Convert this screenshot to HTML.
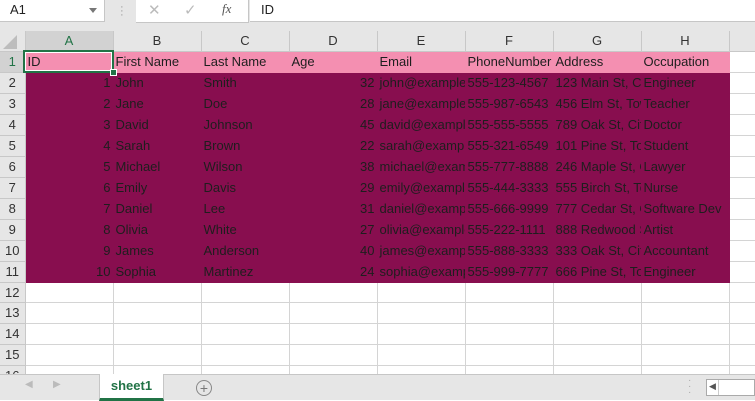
<!DOCTYPE html>
<html><head><meta charset="utf-8"><style>
body{margin:0;width:755px;height:400px;overflow:hidden;background:#fff;font-family:"Liberation Sans",Arial,sans-serif;position:relative}
.top{position:absolute;left:0;top:0;width:755px;height:31px;background:#e6e6e6}
.nb{position:absolute;left:0;top:0;width:105px;height:22px;background:#fff;border-right:1px solid #c6c6c6;border-bottom:1px solid #c6c6c6;font-size:13px;line-height:20px;padding-left:10px;box-sizing:border-box;color:#222}
.nb:after{content:"";position:absolute;right:7px;top:8px;border:4px solid transparent;border-top:5px solid #777}
.fx{position:absolute;left:136px;top:0;width:112px;height:22px;background:#fff;border-right:1px solid #c6c6c6;border-bottom:1px solid #c6c6c6}
.fb{position:absolute;left:250px;top:0;width:505px;height:22px;background:#fff;border-bottom:1px solid #c6c6c6;font-size:13px;line-height:20px;padding-left:11px;box-sizing:border-box;color:#222}
table{position:absolute;left:0;top:31px;width:769px;border-collapse:collapse;table-layout:fixed;font-size:13px}
td{height:20px;padding:0 2px;border-right:1px solid #d4d4d4;border-bottom:1px solid #d4d4d4;white-space:nowrap;overflow:hidden;text-overflow:clip;color:#1e1e1e;box-sizing:border-box}
tr.h td{background:#e6e6e6;text-align:center;color:#333;border-color:#c8c8c8;height:20px}
td.r{background:#e6e6e6;text-align:center;color:#333;border-color:#c8c8c8;padding:0}
tr.p td:not(.r):not(.e){background:#f48fb1;border-color:#f48fb1}
tr.d td:not(.r):not(.e){background:#880e4f;border-color:#880e4f}
tr.d td{height:21px}
td.n{text-align:right}
.tabs{position:absolute;left:0;top:374px;width:755px;height:26px;background:#e6e6e6;border-top:1px solid #c6c6c6;box-sizing:border-box}
.tab{position:absolute;left:99px;top:-1px;width:63px;height:24px;background:#fff;border:1px solid #c6c6c6;border-top:none;border-bottom:3px solid #217346;font-size:13px;font-weight:bold;color:#217346;text-align:center;line-height:24px}
</style></head><body>
<div class="top">
<div class="nb">A1</div>
<div style="position:absolute;left:120px;top:5px;color:#999;font-size:11px;line-height:4px">·<br>·<br>·</div>
<div class="fx"><span style="position:absolute;left:12px;top:1px;color:#bbb;font-size:15px">✕</span><span style="position:absolute;left:48px;top:1px;color:#bbb;font-size:15px">✓</span><span style="position:absolute;left:86px;top:1px;color:#555;font-size:13px;font-style:italic;font-family:'Liberation Serif',serif">fx</span></div>
<div class="fb">ID</div>
</div>
<table>
<colgroup><col style="width:25px"><col style="width:88px"><col style="width:88px"><col style="width:88px"><col style="width:88px"><col style="width:88px"><col style="width:88px"><col style="width:88px"><col style="width:88px"><col style="width:40px"></colgroup>
<tr class="h"><td></td><td style="background:#d2d2d2;border-bottom:2px solid #217346;color:#217346">A</td><td>B</td><td>C</td><td>D</td><td>E</td><td>F</td><td>G</td><td>H</td><td></td></tr>
<tr class="p" style="height:21px"><td class="r" style="background:#d2d2d2;color:#217346">1</td><td>ID</td><td>First Name</td><td>Last Name</td><td>Age</td><td>Email</td><td>PhoneNumber</td><td>Address</td><td>Occupation</td><td class="e"></td></tr>
<tr class="d"><td class="r">2</td><td class="n">1</td><td>John</td><td>Smith</td><td class="n">32</td><td>john@example.com</td><td>555-123-4567</td><td>123 Main St, City</td><td>Engineer</td><td class="e"></td></tr>
<tr class="d"><td class="r">3</td><td class="n">2</td><td>Jane</td><td>Doe</td><td class="n">28</td><td>jane@example.com</td><td>555-987-6543</td><td>456 Elm St, Town</td><td>Teacher</td><td class="e"></td></tr>
<tr class="d"><td class="r">4</td><td class="n">3</td><td>David</td><td>Johnson</td><td class="n">45</td><td>david@example.com</td><td>555-555-5555</td><td>789 Oak St, City</td><td>Doctor</td><td class="e"></td></tr>
<tr class="d"><td class="r">5</td><td class="n">4</td><td>Sarah</td><td>Brown</td><td class="n">22</td><td>sarah@example.com</td><td>555-321-6549</td><td>101 Pine St, Town</td><td>Student</td><td class="e"></td></tr>
<tr class="d"><td class="r">6</td><td class="n">5</td><td>Michael</td><td>Wilson</td><td class="n">38</td><td>michael@example.com</td><td>555-777-8888</td><td>246 Maple St, City</td><td>Lawyer</td><td class="e"></td></tr>
<tr class="d"><td class="r">7</td><td class="n">6</td><td>Emily</td><td>Davis</td><td class="n">29</td><td>emily@example.com</td><td>555-444-3333</td><td>555 Birch St, Town</td><td>Nurse</td><td class="e"></td></tr>
<tr class="d"><td class="r">8</td><td class="n">7</td><td>Daniel</td><td>Lee</td><td class="n">31</td><td>daniel@example.com</td><td>555-666-9999</td><td>777 Cedar St, City</td><td>Software Dev</td><td class="e"></td></tr>
<tr class="d"><td class="r">9</td><td class="n">8</td><td>Olivia</td><td>White</td><td class="n">27</td><td>olivia@example.com</td><td>555-222-1111</td><td>888 Redwood St</td><td>Artist</td><td class="e"></td></tr>
<tr class="d"><td class="r">10</td><td class="n">9</td><td>James</td><td>Anderson</td><td class="n">40</td><td>james@example.com</td><td>555-888-3333</td><td>333 Oak St, City</td><td>Accountant</td><td class="e"></td></tr>
<tr class="d"><td class="r">11</td><td class="n">10</td><td>Sophia</td><td>Martinez</td><td class="n">24</td><td>sophia@example.com</td><td>555-999-7777</td><td>666 Pine St, Town</td><td>Engineer</td><td class="e"></td></tr>
<tr><td class="r">12</td><td></td><td></td><td></td><td></td><td></td><td></td><td></td><td></td><td></td></tr>
<tr style="height:21px"><td class="r">13</td><td></td><td></td><td></td><td></td><td></td><td></td><td></td><td></td><td></td></tr>
<tr style="height:21px"><td class="r">14</td><td></td><td></td><td></td><td></td><td></td><td></td><td></td><td></td><td></td></tr>
<tr style="height:21px"><td class="r">15</td><td></td><td></td><td></td><td></td><td></td><td></td><td></td><td></td><td></td></tr>
<tr style="height:21px"><td class="r">16</td><td></td><td></td><td></td><td></td><td></td><td></td><td></td><td></td><td></td></tr>
</table>
<div style="position:absolute;left:23px;top:50px;width:91px;height:23px;border:2px solid #217346;box-sizing:border-box;box-shadow:inset 0 0 0 1px #fff"></div>
<div style="position:absolute;left:110px;top:69px;width:5px;height:5px;background:#217346;border:1px solid #fff"></div>
<div style="position:absolute;left:3px;top:35px;border-left:14px solid transparent;border-bottom:14px solid #bdbdbd;width:0;height:0"></div>
<div class="tabs">
<span style="position:absolute;left:25px;top:4px;color:#bbb;font-size:10px">◀</span>
<span style="position:absolute;left:53px;top:4px;color:#bbb;font-size:10px">▶</span>
<div class="tab">sheet1</div>
<div style="position:absolute;left:196px;top:5px;width:14px;height:14px;border:1px solid #888;border-radius:50%;text-align:center;line-height:14px;color:#777;font-size:14px">+</div>
<span style="position:absolute;left:688px;top:3px;color:#aaa;font-size:10px;line-height:6px">·<br>·<br>·</span>
<div style="position:absolute;left:706px;top:4px;width:49px;height:17px;background:#fff;border:1px solid #aaa;box-sizing:border-box"><span style="position:absolute;left:2px;top:1px;font-size:9px;color:#555">◀</span><div style="position:absolute;left:11px;top:0;width:1px;height:15px;background:#ccc"></div></div>
</div>
</body></html>
